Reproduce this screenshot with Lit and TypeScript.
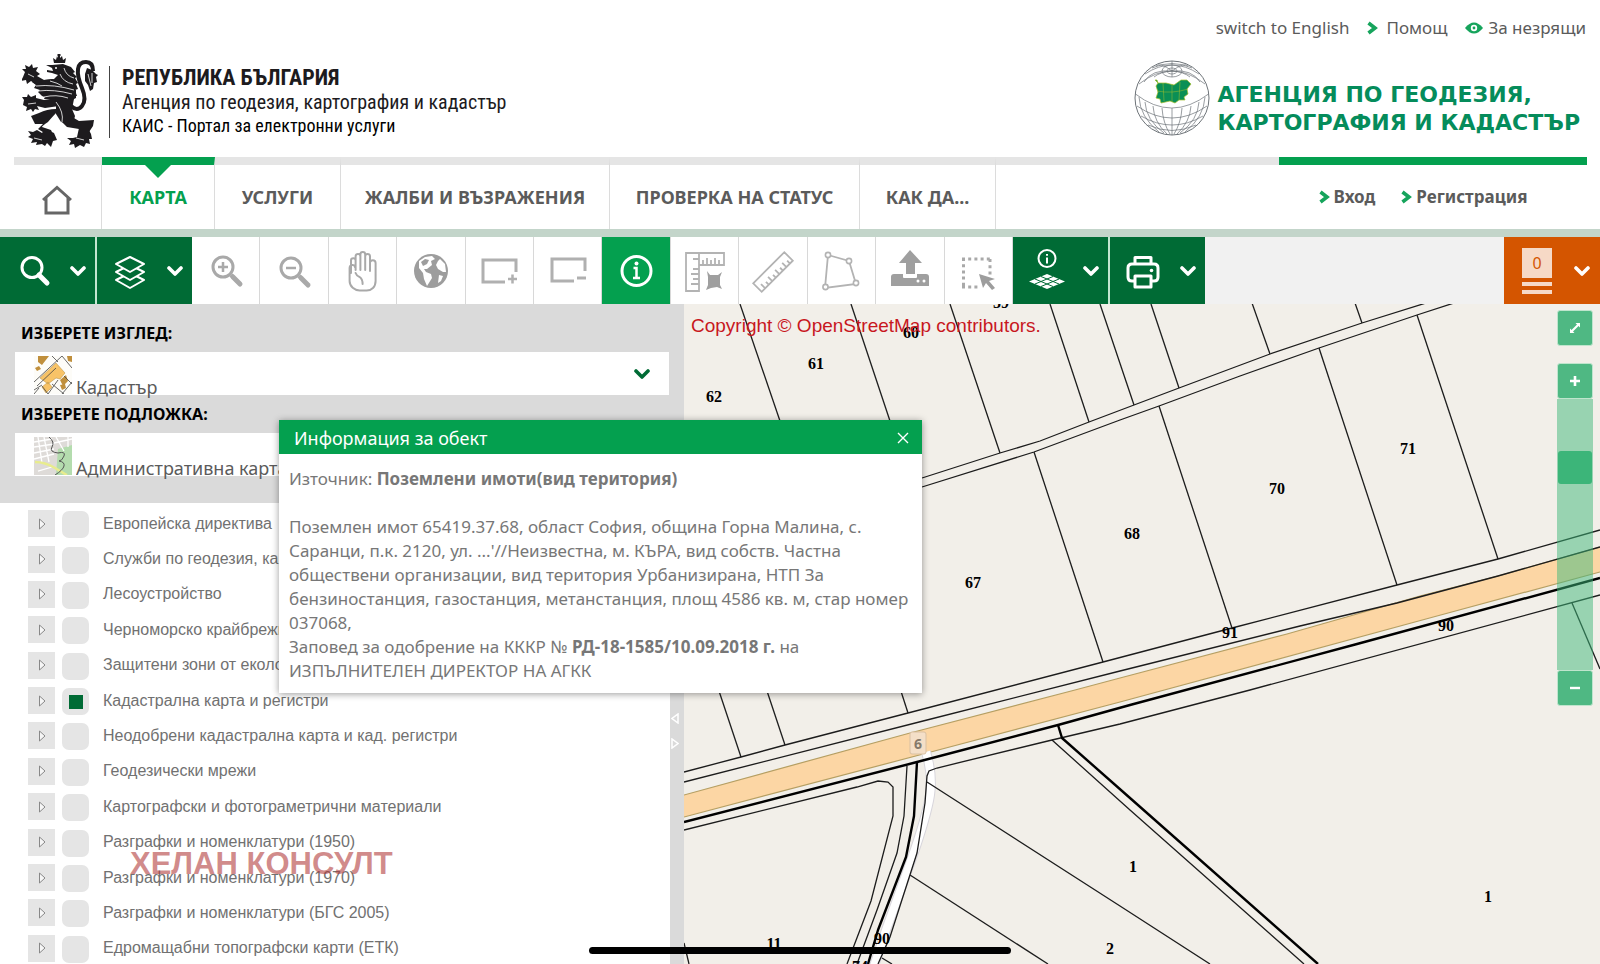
import { LitElement, html, css, svg } from "lit";
import { customElement, state } from "lit/decorators.js";

const G = "#a9a9a9";

const icons: Record<string, unknown> = {
  search: svg`<circle cx="18" cy="16.500" r="10" fill="none" stroke="#fff" stroke-width="3"/><path d="M25 24l8 8" stroke="#fff" stroke-width="5" stroke-linecap="round"/>`,
  layers: svg`<g fill="#006b35" stroke="#fff" stroke-width="2" stroke-linejoin="round"><path d="M19 22l14 7-14 8-14-8z"/><path d="M19 14l14 7-14 8-14-8z"/><path d="M19 6l14 7-14 8-14-8z"/></g>`,
  zoomIn: svg`<g fill="none" stroke="${G}"><circle cx="17" cy="16" r="10" stroke-width="3"/><path d="M12 16h10M17 11v10" stroke-width="2.5"/><path d="M25 24l2 2" stroke-width="4"/><path d="M27 26l7 7" stroke-width="5" stroke-linecap="round"/></g>`,
  zoomOut: svg`<g fill="none" stroke="${G}"><circle cx="17" cy="17" r="10" stroke-width="3"/><path d="M12 17h10" stroke-width="2.5"/><path d="M25 25l2 2" stroke-width="4"/><path d="M27 27l7 7" stroke-width="5" stroke-linecap="round"/></g>`,
  hand: svg`<path d="M8 22V9.500a2.300 2.300 0 0 1 4.600 0V19V5.500a2.300 2.300 0 0 1 4.800 0V19V3.500a2.300 2.300 0 0 1 4.800 0V19V5.500a2.300 2.300 0 0 1 4.800 0V20V12a2.600 2.600 0 0 1 5.600 0V30c0 6-4 9.500-9 9.500h-7c-5 0-10-4-10-9.500V17c0-3.500 5-4 5.400-1M12.600 22q1 3 4 4q3 2 3 7" fill="none" stroke="${G}" stroke-width="2" stroke-linejoin="round" stroke-linecap="round"/>`,
  globe: svg`<circle cx="20" cy="20" r="17" fill="#9d9d9d"/><path d="M8 10l6-4 7-1 3 3-4 2 1 4-5 4-3 0 2 3 5 2 1 4-5 8-3-7-1-6-4-5 0-5z" fill="#fff"/><path d="M10 11l4-3 4 1-2 4-4 2z" fill="#9d9d9d"/><path d="M29 8l5 5 1 8-3 0-5-3-2-4 2-4z" fill="#fff"/><path d="M28 24l4 1-2 5-3 2z" fill="#fff"/>`,
  rectPlus: svg`<g fill="none" stroke="#b0b0b0" stroke-width="3"><path d="M37 21V9H4v22h22"/><path d="M29 28h9M33.500 23.500v9" stroke-width="2.500"/></g>`,
  rectMinus: svg`<g fill="none" stroke="#b0b0b0" stroke-width="3"><path d="M37 20V8H4v22h22"/><path d="M29 27h9"/></g>`,
  info: svg`<g fill="none" stroke="#fff"><circle cx="20.500" cy="20" r="14.500" stroke-width="3"/><path d="M17.500 17h3v10M17 27h7" stroke-width="2.500"/></g><circle cx="20.500" cy="12.500" r="2" fill="#fff"/>`,
  measure: svg`<g fill="none" stroke="#b3b3b3" stroke-width="1.800"><path d="M1 2h38v12H14v26H1zM14 2v12M18 14v-5M22 14V7M26 14v-5M30 14V7M34 14v-5M14 18H8M14 23H6M14 28H8M14 33H6M14 8H8"/></g><path d="M22 20l3 4 8 0 4-3-2 5 0 8 2 4-5-2-6 1-5 2 2-5 0-8z" fill="#9f9f9f"/>`,
  ruler: svg`<g transform="rotate(-45 20 21)" fill="none" stroke="#b3b3b3" stroke-width="1.800"><path d="M-2 15h44v12H-2zM3 27v-6M8 27v-4M13 27v-6M18 27v-4M23 27v-6M28 27v-4M33 27v-6M38 27v-4"/></g>`,
  polygon: svg`<path d="M7 4l21 6 7 23-31 4z" fill="none" stroke="#b3b3b3" stroke-width="1.800"/><g fill="#fff" stroke="#b3b3b3" stroke-width="1.600"><circle cx="7" cy="4" r="2.600"/><circle cx="28" cy="10" r="2.600"/><circle cx="35" cy="32" r="2.600"/><circle cx="4.500" cy="36" r="2.600"/></g>`,
  upload: svg`<path d="M20 -1l12 13h-7v11h-9V12H9zM1 26q0-3 3-3h9v3q0 1 1 1h12q1 0 1-1v-3h9q3 0 3 3v9H1z" fill="#9f9f9f"/><circle cx="28" cy="30" r="1.500" fill="#fff"/><circle cx="34" cy="30" r="1.500" fill="#fff"/>`,
  select: svg`<path d="M4 8h29M4 36h18M5.500 7v29" fill="none" stroke="${G}" stroke-width="3" stroke-dasharray="3 3.200"/><path d="M32 8v16" stroke="${G}" stroke-width="3" stroke-dasharray="3 3.200"/><path d="M21 23l16 5-6 2 6 7-3 2-6-7-3 5z" fill="#9d9d9d"/>`,
  infoLayers: svg`<circle cx="20" cy="7.500" r="8.500" fill="none" stroke="#fff" stroke-width="2"/><path d="M20 6.500v6M20 3v1.800" stroke="#fff" stroke-width="2"/><path d="M20 23l18 7.500L20 38 2 30.500z" fill="#fff"/><path d="M14 25.500l18 7.500M8 28l18 7.500M26 25.500L8 33M32 28l-18 7.500" stroke="#006b35" stroke-width="1"/>`,
  printer: svg`<g fill="none" stroke="#fff" stroke-width="3" stroke-linejoin="round"><path d="M11 13V6.500h16V13M10 30H8q-4 0-4-4V17q0-4 4-4h22q4 0 4 4v9q0 4-4 4h-2"/><path d="M11 25h16v11H11z"/></g><circle cx="27.500" cy="19.500" r="1.800" fill="#fff"/>`,
};

const toolNames: [string, string][] = [
  ["zoomIn", "Увеличи"], ["zoomOut", "Намали"], ["hand", "Премести"], ["globe", "Цял изглед"],
  ["rectPlus", "Увеличи в област"], ["rectMinus", "Намали в област"], ["info", "Информация"],
  ["measure", "Измерване"], ["ruler", "Дължина"], ["polygon", "Площ"], ["upload", "Качване"], ["select", "Избор"],
];

const layers = [
  "Европейска директива", "Служби по геодезия, картография", "Лесоустройство",
  "Черноморско крайбрежие", "Защитени зони от екологична", "Кадастрална карта и регистри",
  "Неодобрени кадастрална карта и кад. регистри", "Геодезически мрежи",
  "Картографски и фотограметрични материали", "Разграфки и номенклатури (1950)",
  "Разграфки и номенклатури (1970)", "Разграфки и номенклатури (БГС 2005)", "Едромащабни топографски карти (ЕТК)",
];

const thinLines = [
  "740,304 780,421", "851,304 890,421", "950,304 1000,453", "1050,304 1089,422", "1100,304 1134,405",
  "1151,304 1179,388", "1252,303 1270,354", "1355,303 1362,323",
  "922,478 1000,453 1040,441 1089,422 1134,405 1179,388 1270,354 1362,323 1426,303",
  "922,487 1034,452 1120,420 1159,406 1240,376 1319,348 1417,315 1454,303",
  "1034,452 1103,662", "1159,406 1232,628", "1319,348 1397,585", "1417,315 1498,559",
  "716,682 741,757", "764,682 785,745", "898,682 908,713",
  "684,772 741,757 785,745 908,713 1103,662 1232,628 1397,585 1498,559 1600,530",
  "684,782 927,720 1120,671 1300,626 1397,603 1498,576 1600,547",
  "684,830 857,787 878,781 888,782 893,787 893,816 871,901 847,964",
  "907,766 904,816 897,853 877,910 857,964",
  "1572,603 1600,669",
  "1600,595 1250,690 1120,724 1052,740 937,768 929,771 927,776 925,803 917,853 890,937 878,964",
  "1052,740 1130,810 1304,964", "927,782 1120,906 1210,964", "910,875 1048,964", "882,958 892,964", "684,943 689,964",
];
const thickLines = [
  "684,822 917,762 1058,725 1130,705 1357,644 1600,578",
  "917,762 914,816 906,857 878,930 868,964",
  "1058,725 1062,738 1130,798 1318,964",
];
const labels: [number, number, string][] = [
  [1001, 308, "59"], [911, 338, "60"], [816, 369, "61"], [714, 402, "62"], [1408, 454, "71"], [1277, 494, "70"],
  [1132, 539, "68"], [973, 588, "67"], [1230, 638, "91"], [1446, 631, "90"], [1133, 872, "1"], [1488, 902, "1"],
  [1110, 954, "2"], [774, 949, "11"], [882, 944, "90"], [860, 972, "74"],
];

const chevronDown = (color: string) => html`<svg class="chev" viewBox="0 0 16 12" aria-hidden="true"><path d="M2 3l6 6 6-6" fill="none" stroke=${color} stroke-width="3.600" stroke-linecap="round" stroke-linejoin="round"/></svg>`;
const arrow = html`<svg class="arrow" viewBox="0 0 11 14" aria-hidden="true"><path d="M1.500 2L8 7l-6.500 5" fill="none" stroke="#16a45c" stroke-width="3.600"/></svg>`;

const lion = html`<svg class="lion" viewBox="0 0 76 96" role="img" aria-label="Герб">
  <g fill="#1d1b1e">
    <path d="M32 9l-1-5 3 2 1-4 1 2 0-2-1-1 1-1 2 0 1 1-1 1 0 2 2-2 1 4 3-2-1 5z"/>
    <path d="M30 11l11-1 8 3 4 5-2 1 4 4-2 1 3 5-2 1 2 5-3 1 2 6-5 0-2 5-6-1-6 4-8-5-6 0 2-5-5-1 5-3-8-1 8-4-8-2 6-3 10-1 4-4-6-2-5-1 0-2 6 1-1-3-6-3 5 0z"/>
    <path d="M12 27l14-1 14 4 14 6 0 8-10 5-14-3-10-4-4-4 2-2-6-2 2-3-4-3z"/>
    <path d="M3 18l-3-3 4 0-1-4 4 2 3-3 1 4 5-1-2 4 4 3-3 2 7 4 9-1-2 6-13 1-7-5-4 3-1-4-5 1 2-4z"/>
    <path d="M2 46l-2-3 5 0 1-3 3 3 5-2 0 3 8 2 12-2 3 8-14 2-8-2 2 4-4-1-2 3-2-3-5 2 1-4-4-2z"/>
    <path d="M33 43l14-3 5 5-2 10 3 7-2 8-12-2-5-8 0-9z"/>
    <path d="M38 55q-8 8-12 13-6 4-6 5l9 3 4 9-9-5-8-5 5-5-8 0-4-8 8-3q8-4 17-4z"/>
    <path d="M45 60l12 7 15-1-1 6-4 6 0 5-8-5-2-3-12-2-6-6z"/>
    <path d="M23 75l9 4 3 7-4 1-2 6-4-4-2 3-3-2-6 1 1-3-6 1 2-4-5-2 3-2-3-4 5 1 4-2 5 3z"/>
    <path d="M57 74l9 0 3 6 1 5-3 0 1 5-4-1-2 4-4-2-5 3-1-4-5 1 2-4-4-3 6 0 4-1z"/>
    <path d="M65 14l5 2 4 4 2 1-2 2 1 5-3 1-1 6-3 2-2-6-3-4 0-7z"/>
  </g>
  <path d="M49 52q6 6 11 0t0-18-4-19 8-7 7 9" fill="none" stroke="#1d1b1e" stroke-width="4"/>
  <path d="M14 32q18-2 38 4M16 37q16-2 34 3M22 43q12-3 24 1M42 14q2 8 10 10M38 20q3 8 13 10M34 48q8 10 6 20M28 27q8 2 12 5M66 20l3 12M70 19l0 10M6 20l6 3M6 50l8-1M12 84l8 2M54 84l8 2" fill="none" stroke="#fff" stroke-width="0.800"/>
  <circle cx="34" cy="14" r="1" fill="#fff"/>
</svg>`;

const worldLogo = html`<svg class="world" viewBox="0 0 76 76" aria-hidden="true">
  <g fill="none" stroke="#6d7378" stroke-width="0.700">
    <circle cx="38" cy="38" r="37" stroke-width="1"/>
    <path d="M38 1v16M38 48v27M1.500 34q36 28 73 0M3 46q35 24 70 0M7 56q31 18 62 0M14 65q24 11 48 0M5 24q33-26 66 0M11 14q27-18 54 0M18 8q20-9 40 0"/>
    <ellipse cx="38" cy="11" rx="10" ry="6"/><ellipse cx="38" cy="11" rx="5" ry="3"/>
    <path d="M28 48q1 15 8 26M48 48q-1 15-8 26M19 46q1 16 14 28M57 46q-1 16-14 28M11 42q1 18 19 31M65 42q-1 18-19 31M5 37q1 20 20 35M71 37q-1 20-20 35M38 11Q26 2 22 6M38 11Q50 2 54 6M38 11Q18 9 10 22M38 11Q58 9 66 22M38 11Q26 12 20 17M38 11Q50 12 56 17"/>
  </g>
  <path d="M21 20l2 0 1 3 8 0 8 2 7-5 6 0 4 4-4 5 1 5-4 3 1 3-6 0-4 3-5-2-9 2-1-4-4-1 2-6-2-6 2-3z" fill="#0a8f55" stroke="#a3bf2c" stroke-width="0.700"/>
  <path d="M29 23l1 18M38 24v18M46 22l-1 18M23 31q15 3 31-2" fill="none" stroke="#a3bf2c" stroke-width="0.500"/>
</svg>`;

const thumbCadastre = html`<svg class="thumb" viewBox="0 0 38 38" aria-hidden="true"><rect width="38" height="38" fill="#fdfcf8"/>
  <path d="M6 22L22 7l9 10-5 6-4-1-8 6zM8 31l6-5 4 5-6 6z" fill="#f8c367" stroke="#b38a3a" stroke-width="0.500"/>
  <path d="M4 0h11l-7 9-4-3zM33 0h5v6l-4-1zM26 24l6-5 2 6-5 5zM1 12l4-2 2 3-4 2zM26 29l5-1 1 4-4 2z" fill="#c08f3c"/>
  <path d="M0 26L28 0M3 30L22 12M28 0l10 12M28 38l10-12M14 38l10-14M0 34l8-5M18 28l12 10M30 20l8 8M8 30l6 8M18 0l6 6M0 38l5-6" fill="none" stroke="#444" stroke-width="0.800"/></svg>`;
const thumbAdmin = html`<svg class="thumb" viewBox="0 0 38 38" aria-hidden="true"><rect width="38" height="38" fill="#dedbd8"/>
  <path d="M24 12l14-4v30H22z" fill="#b4dcae"/>
  <path d="M0 5l18-3M0 10l20-3M0 16l20-4M0 22l20-5M4 0l4 26M10 0l5 25M22 0l8 14M20 6l18-4M4 34l14-4M34 0v10" stroke="#fff" stroke-width="1.300" fill="none"/>
  <path d="M1 25q10 0 20 6t12 7" stroke="#e8ec8e" stroke-width="2.500" fill="none"/>
  <path d="M15 0q6 5 3 10t6 6q8-2 6 3t-5 5q6 1 5 5t-9 9" stroke="#555" stroke-width="1" fill="none"/></svg>`;

@customElement("app-root")
export class AppRoot extends LitElement {
  @state() private popupOpen = true;
  @state() private zoom = 78;

  static styles = css`
    :host { display: flex; flex-direction: column; position: relative; height: 100vh; overflow: hidden; background: #fff; color: #5b5b5b; font: 17px/24px "Noto Sans", "Open Sans", sans-serif; }
    * { box-sizing: border-box; }
    a { color: inherit; text-decoration: none; }
    button { font: inherit; color: inherit; border: 0; padding: 0; background: none; cursor: pointer; }
    .top { display: flex; justify-content: flex-end; gap: 18px; padding: 16px 14px 0; }
    .top a, .login a { display: flex; align-items: center; }
    .arrow { width: 11px; height: 14px; flex: none; }
    .top a { gap: 8px; }
    .top .eye { gap: 5px; }
    .eye svg { width: 18px; height: 12px; }
    .brand { display: flex; align-items: flex-start; justify-content: space-between; height: 117px; padding: 14px 20px 0 22px; }
    .state { display: flex; align-items: flex-start; }
    .lion { width: 76px; height: 96px; }
    .state-text { margin: 12px 0 0 11px; border-left: 1px solid #444; padding-left: 12px; height: 72px; color: #1d1b1e; font-family: "Roboto Condensed", Roboto, "Noto Sans", sans-serif; white-space: nowrap; }
    .state-text strong, .state-text span { display: block; line-height: 24px; }
    .state-text strong { font-size: 22px; }
    .l2 { font-size: 20px; }
    .l3 { font-size: 18px; color: #000; }
    .agency { display: flex; align-items: flex-start; gap: 8px; padding-top: 6px; color: #058c5b; font: bold 22px/28px "DejaVu Sans", sans-serif; white-space: nowrap; }
    .agency p { margin: 21px 0 0; }
    .world { width: 76px; height: 76px; }
    nav { display: grid; grid-template-columns: 88px 113px 126px 269px 250px 136px 1fr 308px; margin: 0 13px 0 14px; height: 72px; font-weight: bold; font-size: 18px; }
    nav > * { border-top: 8px solid #e5e5e5; }
    .nav-item { display: flex; align-items: center; justify-content: center; border-right: 1px solid #dcdcdc; position: relative; white-space: nowrap; }
    .nav-item.active { color: #04a04f; border-top-color: #04a04f; }
    .nav-item.active::before { content: ""; position: absolute; top: 0; left: calc(50% - 13px); border: 13px solid transparent; border-top-color: #04a04f; border-bottom: 0; }
    .home svg { width: 32px; height: 30px; margin: 6px 2px 0 0; }
    .login { border-top-color: #04a04f; display: flex; justify-content: center; gap: 26px; padding-right: 20px; font-size: 17px; }
    .login a { gap: 4px; }
    .rule { height: 8px; background: #c3d5ca; flex: none; }
    .tools { display: flex; height: 67px; flex: none; background: #f1f1f1; }
    .menu-btn { display: flex; align-items: center; gap: 16px; padding-left: 14px; background: #006b35; flex: none; box-sizing: content-box; width: 81px; border-right: 2px solid #c3e6d0; }
    .menu-btn.last { border-right: 0; }
    .ico { width: 40px; height: 40px; overflow: visible; flex: none; }
    .chev { width: 16px; height: 12px; flex: none; }
    .plain { display: grid; grid-template-columns: repeat(12, 1fr); width: 821px; flex: none; background: #fff; }
    .plain button { display: flex; align-items: center; justify-content: center; border-right: 1px solid #d8d8d8; }
    .plain button.on { background: #04a04f; }
    .menu-btn.orange { background: #d45500; border: 0; margin-left: auto; width: 82px; }
    .sheet { display: flex; flex-direction: column; align-items: center; width: 40px; gap: 4px; padding-right: 2px; }
    .sheet b { width: 30px; height: 30px; background: #f6d9c6; color: #d45500; font: 16px/30px "Noto Sans", sans-serif; }
    .sheet i { width: 30px; height: 4px; background: #f6d9c6; }
    main { display: flex; flex: 1; min-height: 0; }
    aside { display: flex; flex-direction: column; width: 670px; flex: none; }
    .pickers { background: #dadada; height: 199px; padding: 15px 1px 0 15px; }
    .pickers label { display: block; padding-left: 6px; line-height: 28px; font-weight: bold; font-size: 16px; color: #000; }
    .field { display: flex; align-items: center; height: 43px; margin: 5px 0; padding: 0 19px; background: #fff; }
    .thumb { width: 38px; height: 38px; margin-top: 2px; flex: none; }
    .field select { flex: 1; align-self: flex-end; height: 28px; margin-bottom: -6px; appearance: none; border: 0; background: none; padding: 0 4px; color: #5b5b5b; font: 18px/28px "Noto Sans", sans-serif; outline: 0; }
    .tree { flex: 1; display: grid; grid-template-rows: repeat(13, 1fr); margin: 0 0 -2px; padding: 3px 0 0 28px; list-style: none; font: 16px/24px "Liberation Sans", Arial, sans-serif; color: #717171; }
    .tree li { display: flex; align-items: center; }
    .exp { width: 27px; height: 27px; background: #e5e5e5; margin-right: 7px; display: flex; align-items: center; justify-content: center; }
    .exp svg { width: 8px; height: 12px; }
    .tree label { display: flex; align-items: center; gap: 14px; }
    .tree input { appearance: none; width: 27px; height: 27px; margin: 2px 0 0; border-radius: 7px; background: #e5e5e5; }
    .tree input:checked { background: linear-gradient(#006b35, #006b35) center / 14px 14px no-repeat #e5e5e5; }
    .split { width: 14px; flex: none; background: #dadada; display: flex; flex-direction: column; align-items: center; justify-content: center; gap: 14px; padding: 193px 4px 0 0; }
    .split svg { width: 8px; height: 11px; }
    .map { position: relative; flex: 1; min-width: 0; background: #f2efe9; }
    .map > svg { position: absolute; inset: 0; width: 100%; height: 100%; }
    .copy { position: absolute; left: 7px; top: 10px; color: #c8171e; font: 19px/24px "Liberation Sans", Arial, sans-serif; white-space: nowrap; }
    .lbl { font: bold 16px "Liberation Serif", serif; fill: #000; text-anchor: middle; }
    .badge { font: bold 14px "Noto Sans", sans-serif; fill: #857a6c; text-anchor: middle; }
    .controls { position: absolute; right: 7px; top: 6px; width: 36px; display: flex; flex-direction: column; }
    .controls button { height: 36px; background: #4fb883; border: 1px solid #bfe5cd; border-radius: 3px; display: flex; align-items: center; justify-content: center; }
    .controls button svg { width: 12px; height: 12px; }
    .controls .full { margin-bottom: 17px; }
    .controls input { appearance: none; writing-mode: vertical-lr; direction: rtl; width: 36px; height: 271px; margin: 0; background: rgba(62, 184, 122, 0.5); }
    .controls input::-webkit-slider-thumb { appearance: none; width: 34px; height: 33px; border-radius: 3px; background: #3cb579; }
    .popup { position: absolute; left: 279px; top: 420px; width: 643px; background: #fff; box-shadow: 0 1px 7px rgba(0, 0, 0, 0.4); color: #777; }
    .popup header { display: flex; align-items: center; justify-content: space-between; height: 34px; padding: 2px 13px 0 15px; background: #04a04f; color: #fff; font-size: 18px; }
    .popup header svg { width: 12px; height: 12px; display: block; }
    .popup .body { padding: 13px 10px 10px; }
    .popup p { margin: 0; }
    .popup p + .gap { margin-top: 24px; }
    .mark { position: absolute; left: 130px; top: 846px; color: rgba(178, 60, 60, 0.6); font: bold 31px/36px "Liberation Sans", Arial, sans-serif; white-space: nowrap; pointer-events: none; }
    .bar { position: absolute; left: 50%; transform: translateX(-50%); bottom: 10px; width: 422px; height: 7px; border-radius: 4px; background: #000; }
  `;

  private menuBtn(icon: string, label: string, last = false) {
    return html`<button class="menu-btn ${last ? "last" : ""}" aria-label=${label}><svg class="ico" viewBox="0 0 40 40">${icons[icon]}</svg>${chevronDown("#fff")}</button>`;
  }

  render() {
    return html`
      <div class="top">
        <a href="#">switch to English</a>
        <a href="#">${arrow}Помощ</a>
        <a href="#" class="eye"><svg viewBox="0 0 18 12" aria-hidden="true"><path d="M0 6q9-11 18 0-9 11-18 0z" fill="#16a45c"/><circle cx="9" cy="6" r="3.200" fill="#fff"/><circle cx="9" cy="6" r="1.400" fill="#16a45c"/></svg>За незрящи</a>
      </div>
      <div class="brand">
        <div class="state">${lion}
          <div class="state-text" lang="bg"><strong>РЕПУБЛИКА БЪЛГАРИЯ</strong><span class="l2">Агенция по геодезия, картография и кадастър</span><span class="l3">КАИС - Портал за електронни услуги</span></div>
        </div>
        <div class="agency">${worldLogo}<p>АГЕНЦИЯ ПО ГЕОДЕЗИЯ,<br>КАРТОГРАФИЯ И КАДАСТЪР</p></div>
      </div>
      <nav>
        <a class="nav-item home" href="#" aria-label="Начало"><svg viewBox="0 0 32 30"><path d="M2 15L16 2.500 30 15M5 13v15h22V13" fill="none" stroke="#666" stroke-width="3"/></svg></a>
        <a class="nav-item active" href="#">КАРТА</a>
        <a class="nav-item" href="#">УСЛУГИ</a>
        <a class="nav-item" href="#">ЖАЛБИ И ВЪЗРАЖЕНИЯ</a>
        <a class="nav-item" href="#">ПРОВЕРКА НА СТАТУС</a>
        <a class="nav-item" href="#">КАК ДА...</a>
        <span></span>
        <div class="login"><a href="#">${arrow}Вход</a><a href="#">${arrow}Регистрация</a></div>
      </nav>
      <div class="rule"></div>
      <div class="tools">
        ${this.menuBtn("search", "Търсене")}${this.menuBtn("layers", "Слоеве", true)}
        <div class="plain">${toolNames.map(([k, n]) => html`<button class=${k === "info" ? "on" : ""} aria-label=${n}><svg class="ico" viewBox="0 0 40 40">${icons[k]}</svg></button>`)}</div>
        ${this.menuBtn("infoLayers", "Справка")}${this.menuBtn("printer", "Печат", true)}
        <button class="menu-btn orange" aria-label="Количка"><span class="sheet"><b>0</b><i></i><i></i></span>${chevronDown("#fff")}</button>
      </div>
      <main>
        <aside>
          <div class="pickers">
            <label for="view">ИЗБЕРЕТЕ ИЗГЛЕД:</label>
            <div class="field">${thumbCadastre}<select id="view"><option>Кадастър</option></select>${chevronDown("#006b35")}</div>
            <label for="base">ИЗБЕРЕТЕ ПОДЛОЖКА:</label>
            <div class="field">${thumbAdmin}<select id="base"><option>Административна карта</option></select>${chevronDown("#006b35")}</div>
          </div>
          <ul class="tree">
            ${layers.map((l, i) => html`<li><button class="exp" aria-label="Разгъни"><svg viewBox="0 0 8 12"><path d="M1.500 1v10L7 6z" fill="#f6f6f6" stroke="#888"/></svg></button><label><input type="checkbox" .checked=${i === 5}>${l}</label></li>`)}
          </ul>
        </aside>
        <div class="split"><svg viewBox="0 0 8 11"><path d="M7 1v9L1 5.500z" fill="none" stroke="#fff" stroke-width="1.500"/></svg><svg viewBox="0 0 8 11"><path d="M1 1v9l6-4.500z" fill="none" stroke="#fff" stroke-width="1.500"/></svg></div>
        <div class="map">
          <svg viewBox="684 304 916 660" preserveAspectRatio="xMinYMin slice" aria-label="Карта">
            <path d="M684 795L910 733 1075 690 1120 678 1287 634 1420 596 1498 576 1600 547V572L1437 616 1120 702 927 753 684 817z" fill="#fcd6a4"/>
            <path d="M684 795L910 733 1075 690 1120 678 1287 634 1420 596 1498 576 1600 547M1600 572L1437 616 1120 702 927 753 684 817" fill="none" stroke="#b59f63" stroke-width="1.200"/>
            <path d="M926 752Q933 775 930 795T912 858L886 930 874 966" fill="none" stroke="#d8d6dc" stroke-width="10"/>
            <path d="M926 752Q933 775 930 795T912 858L886 930 874 966" fill="none" stroke="#fff" stroke-width="8"/>
            <g fill="none" stroke="#1c1c1c" stroke-width="1.300">${thinLines.map((p) => svg`<polyline points=${p}/>`)}</g>
            <g fill="none" stroke="#000" stroke-width="2.400" stroke-linejoin="round">${thickLines.map((p) => svg`<polyline points=${p}/>`)}</g>
            <rect x="910" y="732" width="16" height="22" rx="2" fill="#f4dfc8" stroke="#d9c0a2"/>
            <text class="badge" x="918" y="749">6</text>
            ${labels.map(([x, y, t]) => svg`<text class="lbl" x=${x} y=${y}>${t}</text>`)}
          </svg>
          <div class="copy">Copyright © OpenStreetMap contributors.</div>
          <div class="controls">
            <button class="full" aria-label="Цял екран"><svg viewBox="0 0 12 12"><path d="M6.500 1H11v4.500L9.500 4 4 9.500 5.500 11H1V6.500L2.500 8 8 2.500z" fill="#fff"/></svg></button>
            <button aria-label="Приближи"><svg viewBox="0 0 12 12"><path d="M6 1v10M1 6h10" stroke="#fff" stroke-width="2.600"/></svg></button>
            <input type="range" aria-label="Мащаб" min="0" max="100" .value=${String(this.zoom)} @input=${(e: Event) => (this.zoom = Number((e.target as HTMLInputElement).value))}>
            <button aria-label="Отдалечи"><svg viewBox="0 0 12 12"><path d="M1 6h10" stroke="#fff" stroke-width="2.400"/></svg></button>
          </div>
        </div>
      </main>
      ${this.popupOpen ? html`<section class="popup" role="dialog" aria-label="Информация за обект">
        <header><span>Информация за обект</span><button aria-label="Затвори" @click=${() => (this.popupOpen = false)}><svg viewBox="0 0 12 12"><path d="M1 1l10 10M11 1L1 11" stroke="#fff" stroke-width="1.400"/></svg></button></header>
        <div class="body">
          <p>Източник: <b>Поземлени имоти(вид територия)</b></p>
          <p class="gap">Поземлен имот 65419.37.68, област София, община Горна Малина, с. Саранци, п.к. 2120, ул. ...'//Неизвестна, м. КЪРА, вид собств. Частна обществени организации, вид територия Урбанизирана, НТП За бензиностанция, газостанция, метанстанция, площ 4586 кв. м, стар номер 037068,</p>
          <p>Заповед за одобрение на КККР № <b>РД-18-1585/10.09.2018 г.</b> на ИЗПЪЛНИТЕЛЕН ДИРЕКТОР НА АГКК</p>
        </div>
      </section>` : ""}
      <div class="mark">ХЕЛАН КОНСУЛТ</div>
      <div class="bar"></div>
    `;
  }
}
